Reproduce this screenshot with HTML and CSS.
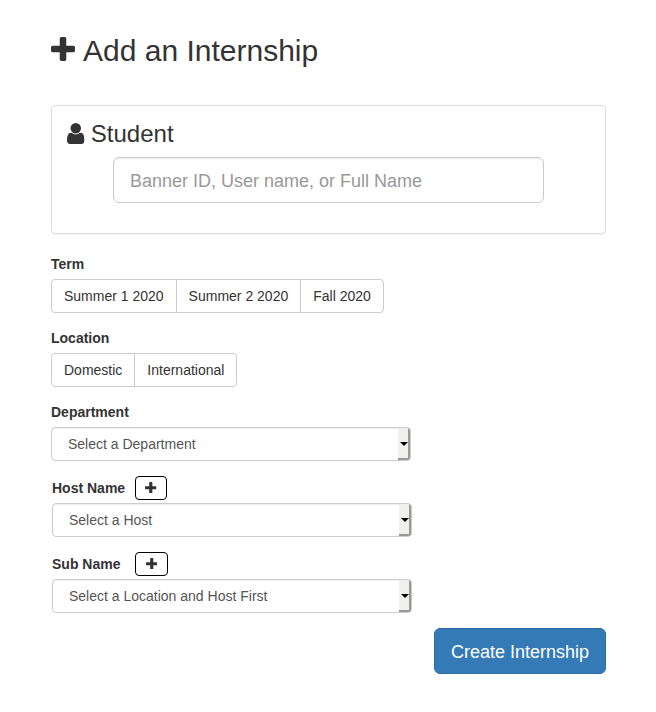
FILE: index.html
```html
<!DOCTYPE html>
<html lang="en">
<head>
<meta charset="utf-8">
<title>Add an Internship</title>
<link rel="stylesheet" href="styles.css">
</head>
<body>
<svg class="defs" aria-hidden="true">
  <symbol id="plus" viewBox="192 128 1408 1408"><path d="M1600 736v192q0 40-28 68t-68 28h-416v416q0 40-28 68t-68 28h-192q-40 0-68-28t-28-68v-416h-416q-40 0-68-28t-28-68v-192q0-40 28-68t68-28h416v-416q0-40 28-68t68-28h192q40 0 68 28t28 68v416h416q40 0 68 28t28 68z"/></symbol>
  <symbol id="user" viewBox="256 128 1280 1536"><path d="M1536 1399q0 109-62.500 187t-150.500 78h-854q-88 0-150.500-78t-62.500-187q0-85 8.500-160.500t31.500-152 58.500-131 94-89 134.500-34.500q131 128 313 128t313-128q76 0 134.500 34.500t94 89 58.500 131 31.500 152 8.500 160.500zm-256-887q0 159-112.500 271.500t-271.500 112.500-271.500-112.500-112.500-271.500 112.500-271.500 271.500-112.500 271.500 112.500 112.500 271.500z"/></symbol>
</svg>
<main class="page">
  <h1 class="title"><svg class="icon-title"><use href="#plus"/></svg>Add an Internship</h1>

  <section class="panel">
    <h3 class="panel-title"><svg class="icon-user"><use href="#user"/></svg>Student</h3>
    <input class="search" type="text" placeholder="Banner ID, User name, or Full Name">
  </section>

  <div class="group">
    <div class="label">Term</div>
    <div class="buttons">
      <button class="option">Summer 1 2020</button>
      <button class="option">Summer 2 2020</button>
      <button class="option">Fall 2020</button>
    </div>
  </div>

  <div class="group">
    <div class="label">Location</div>
    <div class="buttons">
      <button class="option">Domestic</button>
      <button class="option">International</button>
    </div>
  </div>

  <div class="group">
    <div class="label">Department</div>
    <div class="select"><span class="value">Select a Department</span><span class="drop"></span></div>
  </div>

  <div class="group inset">
    <div class="label-row"><span class="label host">Host Name</span><button class="add"><svg class="icon-add"><use href="#plus"/></svg></button></div>
    <div class="select"><span class="value">Select a Host</span><span class="drop"></span></div>
  </div>

  <div class="group inset">
    <div class="label-row"><span class="label host">Sub Name</span><button class="add wide"><svg class="icon-add"><use href="#plus"/></svg></button></div>
    <div class="select"><span class="value">Select a Location and Host First</span><span class="drop"></span></div>
  </div>

  <div class="actions"><button class="create">Create Internship</button></div>
</main>
</body>
</html>
```
FILE: styles.css
```css
* { box-sizing: border-box; }

body {
  margin: 0;
  background: #fff;
  color: #333;
  font: 14px/20px "Liberation Sans", Arial, sans-serif;
}

button, input { font-family: inherit; margin: 0; }
svg { fill: currentColor; flex: none; }
.defs { display: none; }

.page { padding: 34px 50px 38px 51px; }

.title {
  display: flex;
  margin: 0 0 38px;
  font-size: 30px;
  font-weight: 500;
  line-height: 33px;
}
.icon-title { width: 24px; height: 24px; margin: 3px 8px 0 0; }

.panel {
  height: 129px;
  margin-bottom: 20px;
  padding: 15px;
  border: 1px solid #ddd;
  border-radius: 4px;
  box-shadow: 0 1px 1px rgba(0, 0, 0, .05);
}
.panel-title {
  display: flex;
  margin: 0 0 10px;
  font-size: 24px;
  font-weight: 500;
  line-height: 26px;
}
.icon-user { width: 17.500px; height: 21px; margin: 2px 6.340px 0 0; }

.search {
  display: block;
  width: 431px;
  height: 46px;
  margin-left: 46px;
  padding: 12px 16px 10px;
  border: 1px solid #ccc;
  border-radius: 6px;
  box-shadow: inset 0 1px 1px rgba(0, 0, 0, .075);
  font-size: 18px;
  line-height: 24px;
}
.search::placeholder { color: #999; opacity: 1; }

.group { margin-bottom: 15px; }
.label { font-weight: 700; }
.group > .label { margin-bottom: 5px; }

.buttons { display: flex; }
.option {
  height: 34px;
  margin-left: -1px;
  padding: 6px 12px;
  border: 1px solid #ccc;
  background: #fff;
  color: #333;
  font-size: 14px;
  line-height: 20px;
  white-space: nowrap;
}
.option:first-child { margin-left: 0; border-radius: 4px 0 0 4px; }
.option:last-child { border-radius: 0 4px 4px 0; }

.select {
  display: flex;
  justify-content: space-between;
  width: 360px;
  height: 34px;
  overflow: hidden;
  border: 1px solid #ccc;
  border-radius: 4px;
  box-shadow: inset 0 1px 1px rgba(0, 0, 0, .075);
  color: #555;
}
.value { padding: 6px 16px; }
.drop {
  display: flex;
  align-items: center;
  justify-content: center;
  width: 12px;
  border-right: 2px solid #999;
  border-bottom: 2px solid #999;
  background: #f0f0ef;
}
.drop::before {
  content: "";
  margin: 2px 0 0 2px;
  border: 3.500px solid transparent;
  border-width: 4px 4px 0;
  border-top-color: #000;
}

.inset { margin-left: 1px; }
.label-row { display: flex; height: 27px; }
.host { width: 83px; padding-top: 2px; }
.add {
  display: flex;
  align-items: center;
  justify-content: center;
  width: 32px;
  height: 24px;
  padding: 0 0 1px;
  border: 1px solid #000;
  border-radius: 4px;
  background: #fff;
  color: #333;
}
.wide { width: 33px; }
.icon-add { width: 11.500px; height: 11.500px; }

.actions { display: flex; justify-content: flex-end; }
.create {
  width: 172px;
  height: 46px;
  padding: 2px 0 0;
  border: 1px solid #2e6da4;
  border-radius: 6px;
  background: #337ab7;
  color: #fff;
  font-size: 18px;
  line-height: 24px;
}
```
